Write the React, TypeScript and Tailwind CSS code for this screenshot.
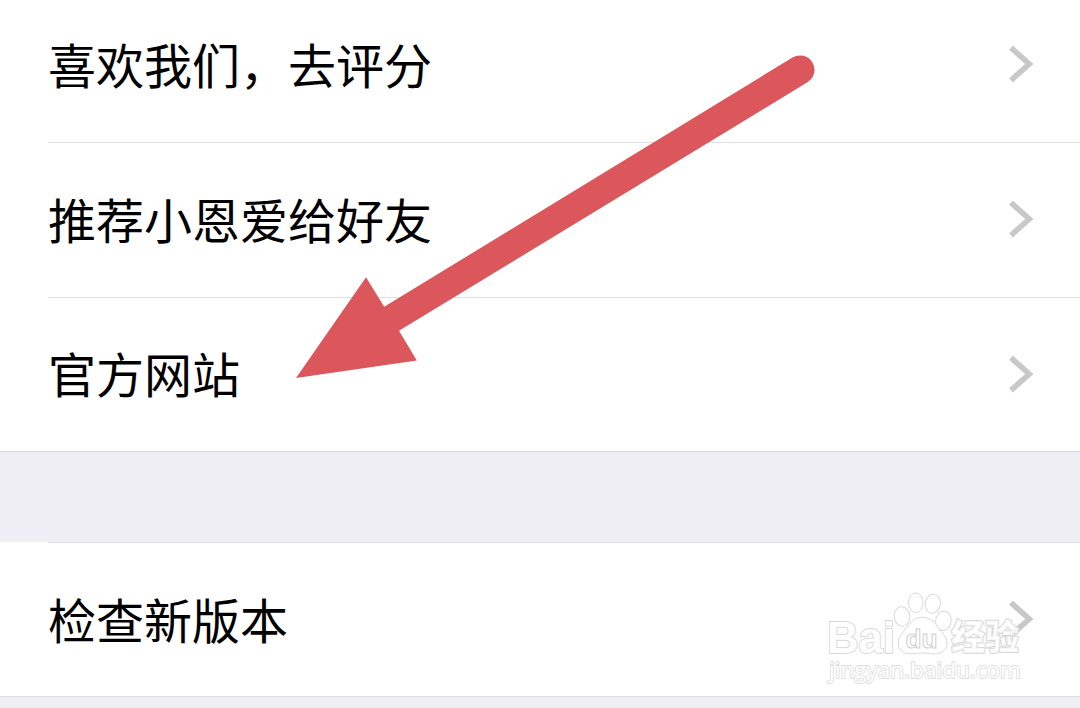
import React from "react";
import clsx from "clsx";

const Chevron: React.FC = () => (
  <svg viewBox="0 0 26 38" className="w-[26px] h-[38px] shrink-0">
    <path d="M2 2.7 L20.3 19 L2 35.3" fill="none" stroke="#c8c8c8" strokeWidth="5.6" />
  </svg>
);

interface RowProps {
  label: string;
  className?: string;
}

const Row: React.FC<RowProps> = ({ label, className }) => (
  <button
    type="button"
    className={clsx("flex w-full items-center justify-between pl-12 pr-[45px] text-left", className)}
  >
    <span className="pb-[3px] text-[48px] leading-[72px] text-black">{label}</span>
    <Chevron />
  </button>
);

const Divider: React.FC = () => <div className="ml-12 h-px shrink-0 bg-[#e0e0e0]" />;

const Arrow: React.FC = () => (
  <svg viewBox="0 0 1080 708" className="pointer-events-none absolute inset-0 h-full w-full">
    <path
      d="M296 378 L366 277.3 L384.2 306.8 L792.5 57.5 A14.4 14.4 0 0 1 807.5 82.3 L399 330.8 L416.8 360.5 Z"
      fill="#db575c"
    />
  </svg>
);

const Watermark: React.FC = () => (
  <svg
    viewBox="820 585 210 105"
    className="pointer-events-none absolute left-[820px] top-[585px] h-[105px] w-[210px]"
    fill="#ffffff"
    stroke="#d9d9d9"
    strokeWidth="1"
    strokeLinejoin="round"
  >
    <text
      x="827"
      y="652.5"
      fontSize="45"
      textLength="68"
      lengthAdjust="spacingAndGlyphs"
      paintOrder="stroke"
      strokeWidth="2"
      className="font-['Liberation_Sans',sans-serif] font-bold"
    >
      Bai
    </text>
    <text
      x="951"
      y="649.5"
      fontSize="35"
      textLength="68"
      lengthAdjust="spacingAndGlyphs"
      paintOrder="stroke"
      strokeWidth="2"
      fillOpacity="0.8"
      className="font-['Noto_Sans_CJK_SC',sans-serif] font-black"
    >
      经验
    </text>
    {/* paw */}
    <ellipse cx="902" cy="616.5" rx="7.8" ry="9.8" transform="rotate(-8 902 616.5)" />
    <ellipse cx="915.7" cy="602.7" rx="7.4" ry="9.8" />
    <ellipse cx="932.8" cy="603.8" rx="7.6" ry="9.6" transform="rotate(10 932.8 603.8)" />
    <ellipse cx="943.4" cy="620.8" rx="7.8" ry="9.6" transform="rotate(8 943.4 620.8)" />
    <path d="M922 617.3 C929 617.3 934 621 937 626 C939.5 630 947 636 947 643 C947 649.5 942 653.8 935 653.8 C930 653.8 927 653 922.5 653 C918 653 915 653.8 909.5 653.8 C902.5 653.8 898.3 649 898.3 643 C898.3 635 904.5 631 908 626 C911.5 621 915 617.3 922 617.3 Z" />
    <text
      x="905.5"
      y="648"
      fontSize="26"
      textLength="32"
      lengthAdjust="spacingAndGlyphs"
      stroke="#cfcfcf"
      className="font-['Liberation_Sans',sans-serif] font-bold"
    >
      du
    </text>
    <text
      x="829"
      y="678"
      fontSize="22"
      textLength="192"
      lengthAdjust="spacingAndGlyphs"
      paintOrder="stroke"
      strokeWidth="1.8"
      stroke="#dedede"
      className="font-['Open_Sans',sans-serif] font-normal"
    >
      jingyan.baidu.com
    </text>
  </svg>
);

export default function App() {
  return (
    <div className="relative flex h-[708px] w-[1080px] flex-col overflow-hidden bg-[#eeeef4] font-['Noto_Sans_CJK_SC',sans-serif]">
      <section className="border-b border-[#dedee0] bg-white">
        <Row label="喜欢我们，去评分" className="h-[142px] pb-[14px]" />
        <Divider />
        <Row label="推荐小恩爱给好友" className="h-[154px] pb-0.5" />
        <Divider />
        <Row label="官方网站" className="h-[153px] pb-0.5" />
      </section>
      <section className="mt-[90px] border-b border-[#dedee0] bg-white">
        <Divider />
        <Row label="检查新版本" className="h-[153px] pb-px" />
      </section>
      <Arrow />
      <Watermark />
    </div>
  );
}
